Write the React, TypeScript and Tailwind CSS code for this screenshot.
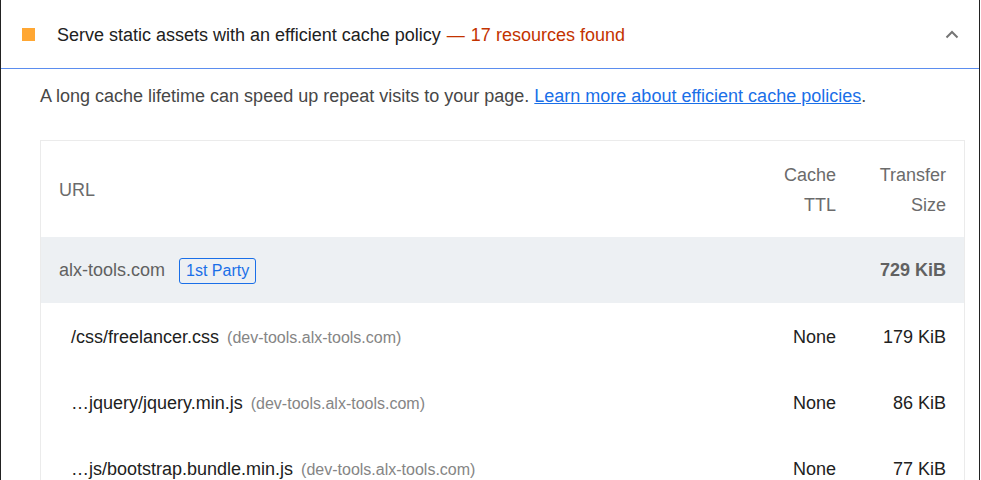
const rows = [
  { path: "/css/freelancer.css", ttl: "None", size: "179 KiB" },
  { path: "…jquery/jquery.min.js", ttl: "None", size: "86 KiB" },
  { path: "…js/bootstrap.bundle.min.js", ttl: "None", size: "77 KiB" },
];

const Chevron = () => (
  <svg width="14" height="9" viewBox="0 0 14 9" fill="none">
    <path d="M1.5 7.5 L7 2 L12.5 7.5" stroke="#757575" strokeWidth="2" />
  </svg>
);

export default function App() {
  return (
    <div className="h-[480px] w-[980px] overflow-hidden border-x border-[#222222] bg-white font-['Liberation_Sans',Arial,sans-serif] text-[18px]">
      <div className="flex h-[69px] items-center border-b border-b-[#5b8def] pl-[21px] pr-[20px] pt-[1px]">
        <div className="h-[13px] w-[13px] bg-[#ffa733]" />
        <div className="ml-[22px] flex-1 leading-6 text-[#212121]">
          Serve static assets with an efficient cache policy
          <span className="mx-[6px] text-[#c33300]">—</span>
          <span className="text-[#c33300]">17 resources found</span>
        </div>
        <Chevron />
      </div>

      <p className="pl-[39px] pt-[15px] leading-6 text-[#474747]">
        A long cache lifetime can speed up repeat visits to your page.{" "}
        <a href="#" className="text-[#1a6fe8] underline">
          Learn more about efficient cache policies
        </a>
        .
      </p>

      <div className="ml-[39px] mr-[14px] mt-[32px] border border-[#ebebeb]">
        <div className="flex h-[96px] items-center pl-[18px] pr-[18px] pt-[2px] leading-[30px] text-[#6b6b6b]">
          <div className="flex-1">URL</div>
          <div className="w-[80px] text-right">
            <div>Cache</div>
            <div>TTL</div>
          </div>
          <div className="ml-[18px] w-[92px] text-right">
            <div>Transfer</div>
            <div>Size</div>
          </div>
        </div>

        <div className="flex h-[66px] items-center bg-[#edf0f3] pl-[18px] pr-[18px] pt-[1px] text-[#616161]">
          <div className="flex flex-1 items-center">
            <span>alx-tools.com</span>
            <span className="ml-[14px] rounded-[3px] border border-[#1a6fe8] px-[6px] py-[2px] text-[16px] leading-5 text-[#1a6fe8]">
              1st Party
            </span>
          </div>
          <div className="ml-[18px] w-[92px] text-right font-bold">729 KiB</div>
        </div>

        {rows.map((row) => (
          <div
            key={row.path}
            className="flex h-[66px] items-center pl-[30px] pr-[18px] pt-[3px] text-[#212121]"
          >
            <div className="flex-1">
              <span>{row.path}</span>
              <span className="ml-[8px] text-[16px] text-[#858585]">(dev-tools.alx-tools.com)</span>
            </div>
            <div className="w-[80px] text-right">{row.ttl}</div>
            <div className="ml-[18px] w-[92px] text-right">{row.size}</div>
          </div>
        ))}
      </div>
    </div>
  );
}
